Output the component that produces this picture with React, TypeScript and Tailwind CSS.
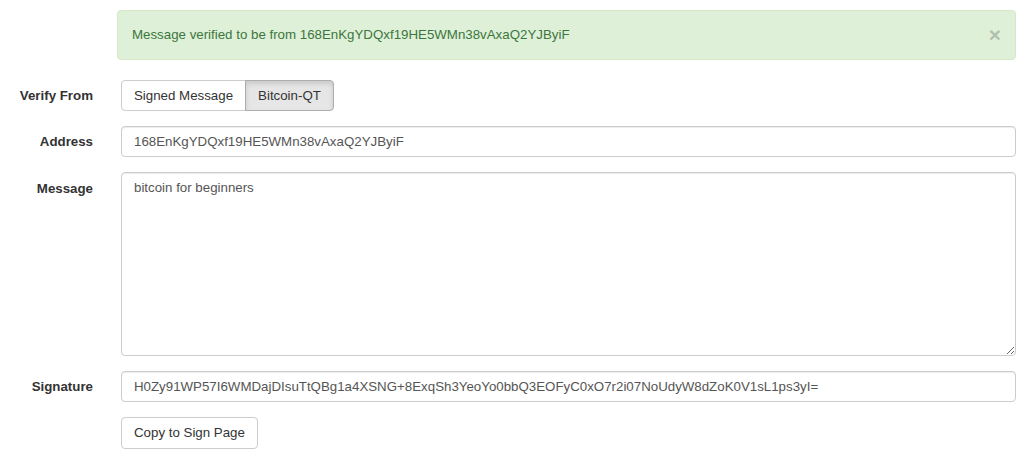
import { useState } from 'react'

const ADDRESS = '168EnKgYDQxf19HE5WMn38vAxaQ2YJByiF'
const SIGNATURE =
  'H0Zy91WP57I6WMDajDIsuTtQBg1a4XSNG+8ExqSh3YeoYo0bbQ3EOFyC0xO7r2i07NoUdyW8dZoK0V1sL1ps3yI='

const inputCls =
  'w-full h-[31px] px-3 rounded-[4px] border border-[#ccc] bg-white text-[13.3px] text-[#555] shadow-[inset_0_1px_1px_rgba(0,0,0,0.075)] outline-none'

function Row({ label, top = false, children }: { label: string; top?: boolean; children: React.ReactNode }) {
  return (
    <div className={`flex ${top ? 'items-start' : 'items-center'}`}>
      <label
        className={`w-[93px] shrink-0 text-right font-bold text-[13.3px] text-[#333] ${top ? 'pt-[7px]' : ''}`}
      >
        {label}
      </label>
      <div className="ml-[28px] flex-1">{children}</div>
    </div>
  )
}

export default function App() {
  const [source, setSource] = useState<'signed' | 'qt'>('qt')
  const [showAlert, setShowAlert] = useState(true)

  const btn = (active: boolean) =>
    `h-[31px] px-3 text-[13.3px] text-[#333] border ${
      active
        ? 'bg-[#e6e6e6] border-[#adadad] shadow-[inset_0_3px_5px_rgba(0,0,0,0.125)]'
        : 'bg-white border-[#ccc]'
    }`

  return (
    <div className="w-[1024px] h-[458px] bg-white pr-[8px] pt-[10px] font-['Liberation_Sans',Arial,sans-serif] leading-[20px]">
      {showAlert && (
        <div className="ml-[117px] h-[50px] flex items-center justify-between pl-[14px] pr-[14px] rounded-[4px] border border-[#d6e9c6] bg-[#dff0d8] text-[13.3px] text-[#3c763d]">
          <span>Message verified to be from {ADDRESS}</span>
          <button
            onClick={() => setShowAlert(false)}
            className="text-[21px] font-bold leading-none text-black opacity-20 -mt-[1px]"
          >
            ×
          </button>
        </div>
      )}

      <div className="mt-[20px] flex flex-col gap-[15px]">
        <Row label="Verify From">
          <div className="flex">
            <button onClick={() => setSource('signed')} className={`${btn(source === 'signed')} rounded-l-[4px]`}>
              Signed Message
            </button>
            <button onClick={() => setSource('qt')} className={`${btn(source === 'qt')} -ml-px rounded-r-[4px]`}>
              Bitcoin-QT
            </button>
          </div>
        </Row>

        <Row label="Address">
          <input className={inputCls} defaultValue={ADDRESS} />
        </Row>

        <Row label="Message" top>
          <textarea
            className="block w-full h-[184px] px-3 py-[5px] rounded-[4px] border border-[#ccc] bg-white text-[13.3px] text-[#555] shadow-[inset_0_1px_1px_rgba(0,0,0,0.075)] outline-none resize-y"
            defaultValue="bitcoin for beginners"
          />
        </Row>

        <Row label="Signature">
          <input className={inputCls} defaultValue={SIGNATURE} />
        </Row>

        <Row label="">
          <button className="h-[32px] px-3 rounded-[4px] border border-[#ccc] bg-white text-[13.3px] text-[#333]">
            Copy to Sign Page
          </button>
        </Row>
      </div>
    </div>
  )
}
